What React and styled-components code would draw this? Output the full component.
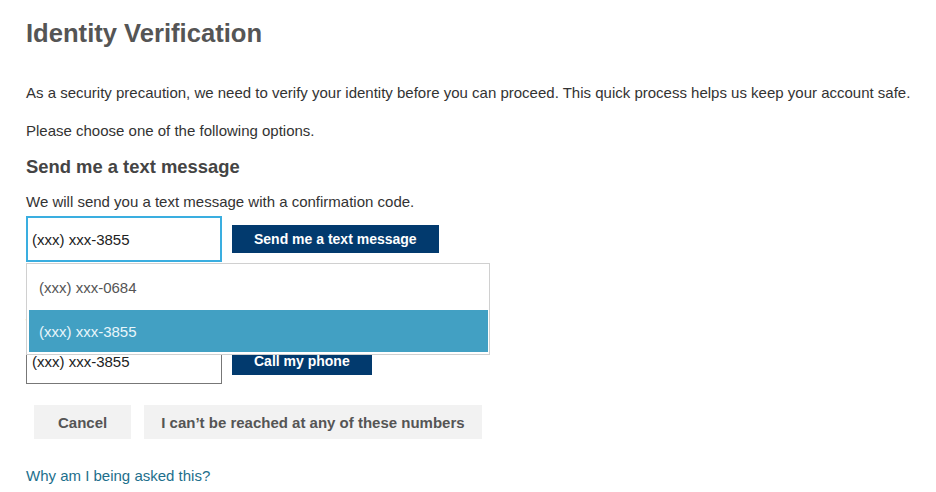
import React, { useState } from 'react'
import styled, { createGlobalStyle } from 'styled-components'

const Global = createGlobalStyle`
  body {
    margin: 0;
    background: #fff;
    font-family: "Liberation Sans", Arial, sans-serif;
    color: #333;
  }
`

const Page = styled.div`
  padding: 18px 26px 0 26px;
  width: 936px;
  box-sizing: border-box;
`

const Title = styled.h1`
  margin: 0 0 36px 0;
  font-size: 25.6px;
  line-height: 30px;
  font-weight: bold;
  color: #555;
`

const Text = styled.p`
  margin: 0 0 ${p => p.gap || 0}px 0;
  font-size: 15px;
  line-height: 18px;
  color: #333;
  white-space: nowrap;
`

const Heading = styled.h3`
  margin: 0 0 15px 0;
  font-size: 18.4px;
  line-height: 22px;
  font-weight: bold;
  color: #444;
`

const Section = styled.div`
  margin-bottom: ${p => p.gap}px;
`

const Row = styled.div`
  position: relative;
  display: flex;
  align-items: center;
  gap: 10px;
  margin-top: 5px;
`

const Field = styled.div`
  width: 196px;
  height: 46px;
  box-sizing: border-box;
  border: ${p => (p.focused ? '2px solid #3aaee0' : '1px solid #777')};
  padding-left: ${p => (p.focused ? 4 : 5)}px;
  display: flex;
  align-items: center;
  font-size: 15px;
  color: #222;
  background: #fff;
`

const Primary = styled.button`
  height: 28px;
  padding: 0 22px;
  border: none;
  background: #023a6e;
  color: #fff;
  font-family: inherit;
  font-size: 14px;
  font-weight: bold;
  cursor: pointer;
`

const Menu = styled.ul`
  position: absolute;
  left: 0;
  top: 47px;
  width: 464px;
  margin: 0;
  padding: 1px 1px 2px 2px;
  list-style: none;
  box-sizing: border-box;
  background: #fff;
  border: 1px solid #d0d0d0;
  z-index: 2;
`

const Item = styled.li`
  height: ${p => (p.active ? 42 : 45)}px;
  display: flex;
  align-items: center;
  padding-left: 10px;
  font-size: 15px;
  color: ${p => (p.active ? '#e8f6fb' : '#555')};
  background: ${p => (p.active ? '#42a0c3' : '#fff')};
  cursor: pointer;
`

const Actions = styled.div`
  display: flex;
  gap: 13px;
  padding-left: 8px;
  margin-bottom: 28px;
`

const Secondary = styled.button`
  height: 34px;
  padding: 0 ${p => p.pad || 18}px;
  border: none;
  background: #f2f2f2;
  color: #555;
  font-family: inherit;
  font-size: 15px;
  font-weight: bold;
`

const Help = styled.a`
  font-size: 15px;
  color: #1d6f8c;
  text-decoration: none;
`

const phones = ['(xxx) xxx-0684', '(xxx) xxx-3855']

export default function App() {
  const [text, setText] = useState(phones[1])
  const [open] = useState(true)

  return (
    <>
      <Global />
      <Page>
        <Title>Identity Verification</Title>
        <Text gap={20}>
          As a security precaution, we need to verify your identity before you can proceed. This quick process helps us keep your account safe.
        </Text>
        <Text gap={16}>Please choose one of the following options.</Text>

        <Section gap={16}>
          <Heading>Send me a text message</Heading>
          <Text>We will send you a text message with a confirmation code.</Text>
          <Row>
            <Field focused>{text}</Field>
            <Primary>Send me a text message</Primary>
            {open && (
              <Menu>
                {phones.map(p => (
                  <Item key={p} active={p === text} onClick={() => setText(p)}>
                    {p}
                  </Item>
                ))}
              </Menu>
            )}
          </Row>
        </Section>

        <Section gap={21}>
          <Heading>Call me</Heading>
          <Text>We will call you with a confirmation code.</Text>
          <Row>
            <Field>(xxx) xxx-3855</Field>
            <Primary>Call my phone</Primary>
          </Row>
        </Section>

        <Actions>
          <Secondary pad={24}>Cancel</Secondary>
          <Secondary pad={17}>I can’t be reached at any of these numbers</Secondary>
        </Actions>

        <Help href="#">Why am I being asked this?</Help>
      </Page>
    </>
  )
}
